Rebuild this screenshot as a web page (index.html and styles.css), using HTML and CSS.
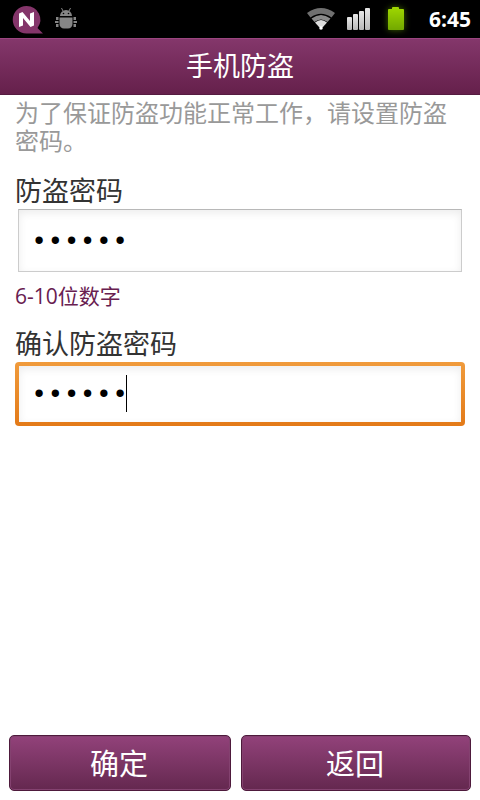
FILE: index.html
```html
<!DOCTYPE html>
<html lang="zh-CN">
<head>
<meta charset="utf-8">
<meta name="viewport" content="width=device-width, initial-scale=1">
<title>手机防盗</title>
<link rel="stylesheet" href="styles.css">
</head>
<body>
<div class="status">
  <div class="status-group status-left">
    <svg class="logo" width="32" height="30" viewBox="0 0 32 30" aria-hidden="true">
      <path fill="#84356a" d="M14.500 1a13.700 13.700 0 1 0 0 27.500H31L25.500 23A13.700 13.700 0 0 0 14.500 1z"/>
      <path fill="#fff" d="M7 8.500 10.500 7 18 16V8.500L22 7V20.500L18.500 22 11 13V20.500L7 22z"/>
    </svg>
    <svg width="22" height="22" viewBox="0 0 22 22" aria-hidden="true">
      <g fill="#858585">
        <path d="M5 8a6 6 0 0 1 12 0zM4.500 9.500h13V16a4.500 4.500 0 0 1-4.500 4.500H9A4.500 4.500 0 0 1 4.500 16z"/>
        <path d="M1 9h2.500v3H1zM0 13h3.500v2H0zM1 16h2.500v3H1zM18.500 9H21v3h-2.500zM18.500 13H22v2h-3.500zM18.500 16H21v3h-2.500z"/>
      </g>
      <path stroke="#858585" d="M8 3 6.500 0M14 3 15.500 0"/>
      <circle cx="8.500" cy="5.500" r="0.800"/><circle cx="13.500" cy="5.500" r="0.800"/>
    </svg>
  </div>
  <div class="status-group status-right">
    <svg width="30" height="24" viewBox="0 0 30 24" aria-hidden="true">
      <path fill="#707070" d="M1 6Q15-4 29 6L25.500 10.500Q15 3 4.500 10.500z"/>
      <path fill="#8a8a8a" d="M5.500 11.500Q15 4.500 24.500 11.500L21.500 15Q15 10 8.500 15z"/>
      <path fill="#ddd" d="M9 15.500Q15 10.500 21 15.500L17 20H13z"/>
      <circle cx="15" cy="21" r="1.800" fill="#fff"/>
    </svg>
    <svg width="24" height="22" viewBox="0 0 24 22" aria-hidden="true">
      <defs><linearGradient id="bar" x2="0" y2="1"><stop stop-color="#e8e8e8"/><stop offset="1" stop-color="#b8b8b8"/></linearGradient></defs>
      <g fill="url(#bar)"><rect y="9" width="5" height="13" rx="1"/><rect x="6" y="6" width="5" height="16" rx="1"/><rect x="12" y="3" width="5" height="19" rx="1"/><rect x="18" width="5" height="22" rx="1"/></g>
    </svg>
    <svg class="battery" width="18" height="24" viewBox="0 0 18 24" aria-hidden="true">
      <defs><linearGradient id="cell" x2="0" y2="1"><stop stop-color="#a0d800"/><stop offset="1" stop-color="#72a800"/></linearGradient></defs>
      <path fill="url(#cell)" d="M5 2V1q0-1 1-1h5q1 0 1 1v1h4q1 0 1 1v19q0 1-1 1H2q-1 0-1-1V3q0-1 1-1z"/>
    </svg>
    <time class="clock">6:45</time>
  </div>
</div>
<header class="titlebar"><h1>手机防盗</h1></header>
<form class="page">
  <main class="content">
    <p class="intro">为了保证防盗功能正常工作，请设置防盗密码。</p>
    <label class="label" for="pw">防盗密码</label>
    <div class="field"><input id="pw" type="password" value="123456"></div>
    <p class="hint">6-10位数字</p>
    <label class="label" for="confirm">确认防盗密码</label>
    <div class="field active"><input id="confirm" type="password" value="123456"><span class="caret"></span></div>
  </main>
  <footer class="actions">
    <button type="submit">确定</button>
    <button type="button">返回</button>
  </footer>
</form>
</body>
</html>
```
FILE: styles.css
```css
* {
  box-sizing: border-box;
}

body {
  margin: 0;
  min-height: 100vh;
  display: flex;
  flex-direction: column;
  background: #fff;
  color: #333;
  font-family: "Open Sans", "Noto Sans CJK SC", sans-serif;
}

h1,
p {
  margin: 0;
  font-weight: 400;
}

svg {
  display: block;
}

.status {
  height: 38px;
  padding: 0 9px 0 12px;
  display: flex;
  justify-content: space-between;
  background: #000;
  color: #fff;
}

.status-group {
  display: flex;
  align-items: center;
}

.status-left {
  gap: 11px;
}

.logo {
  margin-top: 1px;
}

.status-right {
  gap: 11px;
}

.battery {
  margin: 0 13px 0 5px;
  filter: drop-shadow(0 0 3px #3f6500);
}

.clock {
  font-size: 21px;
  font-weight: 700;
}

.titlebar {
  height: 57px;
  padding-bottom: 2px;
  display: flex;
  align-items: center;
  justify-content: center;
  border-top: 1px solid #9b4580;
  border-bottom: 1px solid #551b40;
  background: linear-gradient(#84376b, #65204b);
  color: #fff;
}

.titlebar h1 {
  font-size: 27px;
  line-height: 32px;
}

.page {
  flex: 1;
  display: flex;
  flex-direction: column;
}

.content {
  flex: 1;
  padding: 4px 15px;
}

.intro {
  margin-bottom: 20px;
  color: #999;
  font-size: 24px;
  line-height: 28px;
}

.label {
  display: block;
  font-size: 27px;
  line-height: 32px;
}

.field {
  position: relative;
  margin: 2px 3px 3px;
  height: 63px;
}

.field input {
  width: 100%;
  height: 100%;
  padding: 2px 12px 0;
  border: 1px solid #ccc;
  border-top-color: #b8b8b8;
  border-radius: 0;
  outline: 0;
  background: #fff;
  box-shadow: inset 0 3px 8px #ececec;
  color: #000;
  font-family: "Liberation Mono", monospace;
  font-size: 27px;
}

.active {
  margin: 2px 0;
  padding: 4px;
  height: 64px;
  border-radius: 4px;
  background: linear-gradient(#f09b3c, #e37a18);
}

.active input {
  border: 0;
}

.caret {
  position: absolute;
  left: 111px;
  top: 13px;
  width: 1px;
  height: 37px;
  background: #000;
}

.hint {
  margin: 8px 0 16px;
  color: #682050;
  font-size: 21px;
  line-height: 32px;
}

.actions {
  padding: 0 9px 9px;
  display: grid;
  grid-template-columns: 27fr 28fr;
  gap: 10px;
}

.actions button {
  height: 56px;
  padding: 0 2px 2px 0;
  border: 1px solid #4e1a3c;
  border-radius: 5px;
  background: linear-gradient(#92427a, #64284f);
  box-shadow: inset 0 0 0 1px #844270;
  color: #fff;
  font-family: inherit;
  font-size: 29px;
}
```
